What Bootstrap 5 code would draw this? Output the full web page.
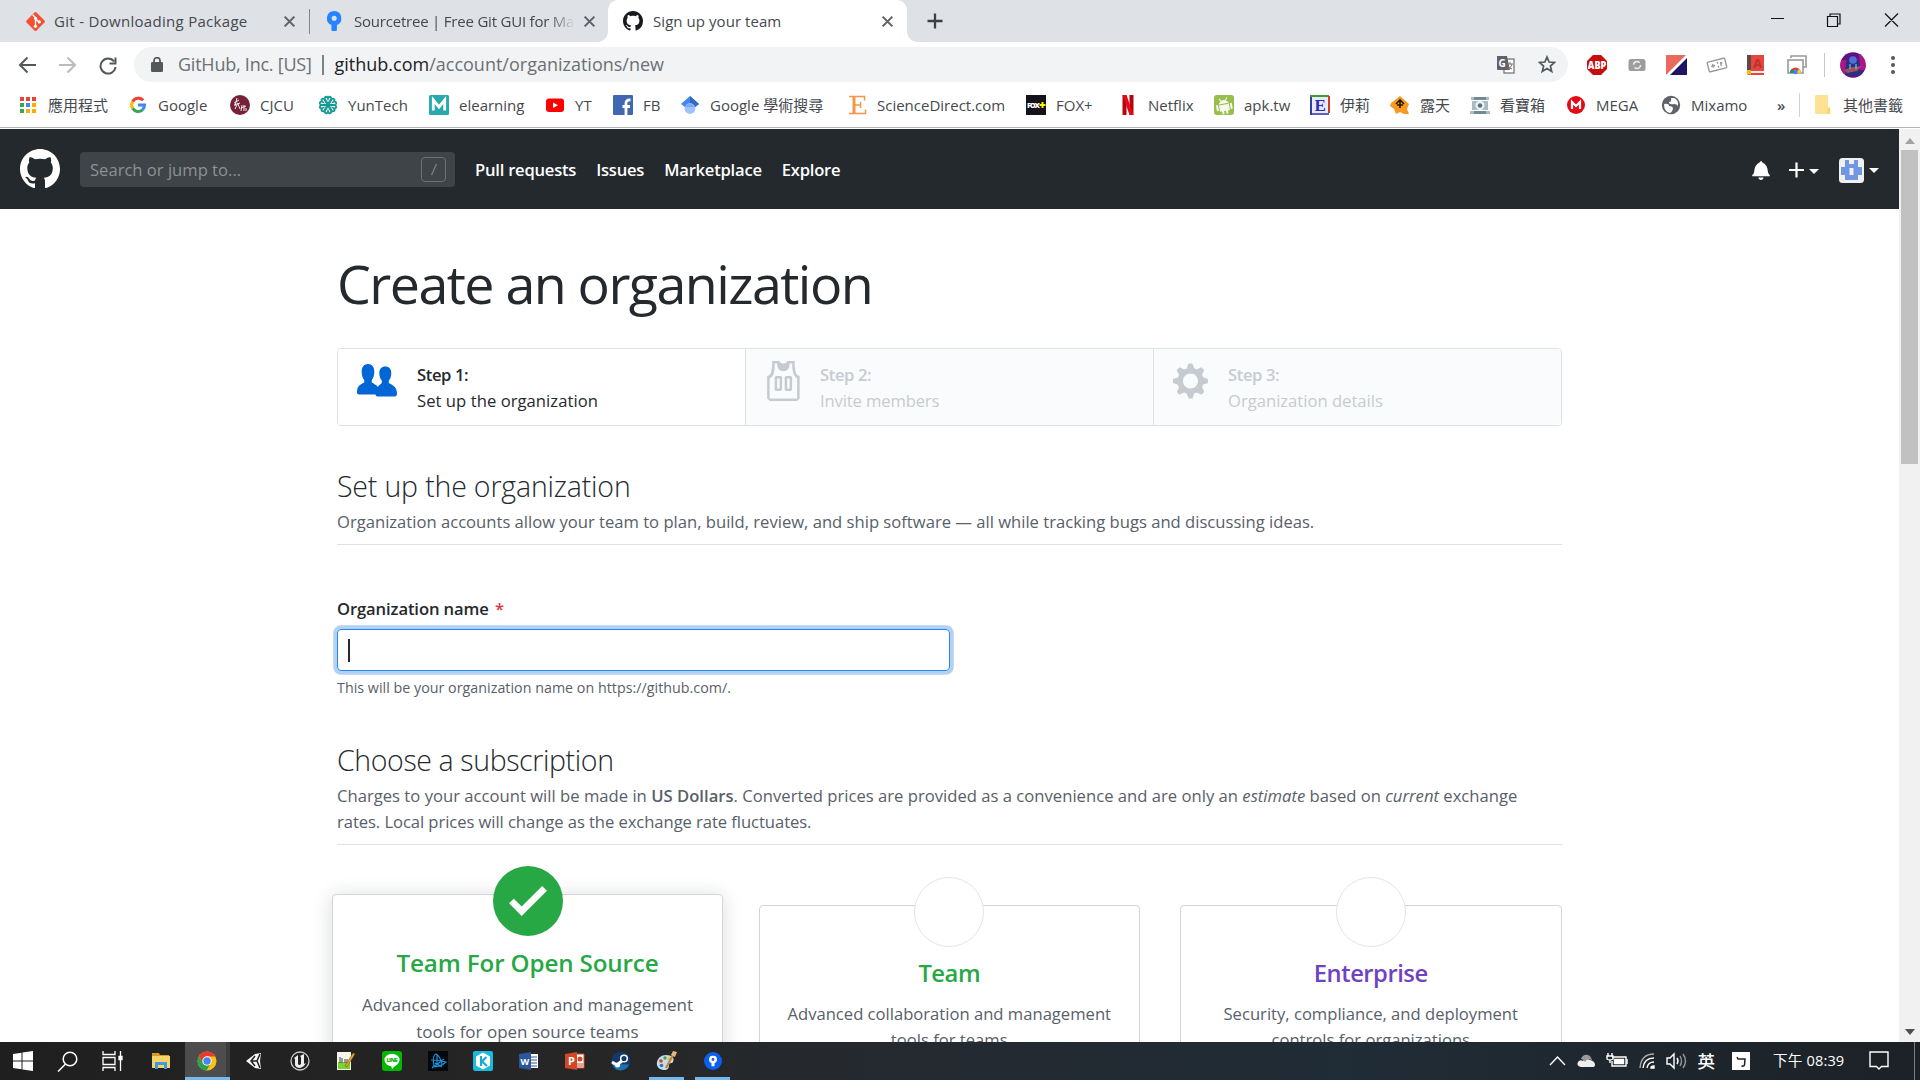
<!DOCTYPE html>
<html lang="zh-Hant">
<head>
<meta charset="utf-8">
<title>Sign up your team</title>
<link href="https://cdn.jsdelivr.net/npm/bootstrap@5.3.0/dist/css/bootstrap.min.css" rel="stylesheet">
<style>
body{width:1920px;height:1080px;overflow:hidden;font-family:"Open Sans","Noto Sans CJK TC",sans-serif;font-size:15px;line-height:22px;color:#24292e;background:#fff}
svg{display:block;flex:none}
/* browser chrome */
.tabstrip{height:42px;background:#dee1e6;color:#45494d}
.tab-item{height:42px;padding:5px 0 5px 24px}
.tab-item .tab-ico{width:20px;margin-right:10px}
.tab-label{white-space:nowrap;overflow:hidden;flex:none}
.tab-one{width:310px}
.tab-two{width:298px;padding-left:12px}
.tab-one .tab-label{width:225px;letter-spacing:.02em}
.tab-two .tab-label{width:221px;letter-spacing:-.014em;-webkit-mask-image:linear-gradient(90deg,#000 88%,transparent);mask-image:linear-gradient(90deg,#000 88%,transparent)}
.tab-sep{width:1px;height:25px;background:#80868b;margin-left:-1px}
.tab-on{width:299px;background:#fff;border-radius:10px 10px 0 0;padding-left:15px;position:relative}
.tab-on::before,.tab-on::after{content:"";position:absolute;bottom:0;width:10px;height:10px}
.tab-on::before{left:-10px;background:radial-gradient(circle at 0 0,transparent 9.5px,#fff 10px)}
.tab-on::after{right:-10px;background:radial-gradient(circle at 100% 0,transparent 9.5px,#fff 10px)}
.tab-on .tab-label{width:224px;letter-spacing:.004em}
.addr-row{height:45px;padding:5px 0 5px 18px}
.omni{height:35px;width:1434px;background:#f1f3f4;border-radius:18px;font-size:18px;color:#6b7075;padding-left:17px;margin-left:16px}
.omni span{position:relative}
.omni-text{padding-bottom:2px}
.omni-host{color:#202124}
.marks{height:40px;padding-left:18px;color:#45494d;padding-bottom:4px}
.bm{white-space:nowrap}
.bm svg{margin-right:10px}
.chrome-edge{height:2px;border-top:1px solid #b3b6b8}
/* site */
.viewport-row{height:913px;overflow:hidden}
.gh-head{height:80px;background:#24292e;color:#fff;padding:0 20px}
.gh-search{width:375px;height:35px;background:#3f4448;border-radius:4px;color:#8d9194;font-size:16.6px;padding:0 9px 0 10px;margin-left:20px}
.gh-search-text{padding-top:2px}
.slash-key{width:25px;height:25px;border:1px solid #6b7075;border-radius:4px}
.gh-nav{font-weight:600;font-size:16.6px;letter-spacing:-.014em;gap:20px;margin-left:20px;padding-top:1px}
.caret-dn{width:0;height:0;border:5px solid transparent;border-top-color:#fff;border-bottom:0}
.scroller{width:21px;background:#f1f1f1;padding-top:9px}
.scroll-thumb{width:17px;height:314px;background:#c1c1c1;margin-top:6px}
.arr{width:0;height:0;border:5px solid transparent}
.arr-up{border-bottom:6px solid #a3a3a3;border-top:0}
.arr-down{border-top:6px solid #505050;border-bottom:0;margin-top:auto;margin-bottom:7px}
.org-main{width:1225px;margin-left:337px;padding-top:31.5px;font-size:16.62px;line-height:26.25px;color:#586069}
.org-main h1{font-size:53.8px;line-height:84px;letter-spacing:-.029em;font-weight:400;color:#24292e;margin:0 0 23.5px}
.org-main h2{font-size:28.5px;line-height:45px;font-weight:300;letter-spacing:-.006em;color:#24292e;margin:0}
.steps-box{height:78px;border:1px solid #dfe2e5;border-radius:4px;overflow:hidden;margin-bottom:37.5px}
.step{width:408px;padding-top:13px;color:#c6cbd1;background:#fafbfc;border-left:1px solid #dfe2e5}
.step-now{width:407px;background:#fff;color:#24292e;border-left:0;letter-spacing:.003em}
.lbl{font-weight:600;letter-spacing:-.007em}
.step b{font-weight:600;letter-spacing:-.024em}
.sec-desc{border-bottom:1px solid #dfe2e5;padding-bottom:9.5px;margin:0}
.sec-desc-plan{padding-bottom:8.5px;letter-spacing:.001em}
.lbl{color:#24292e;margin:50.5px 0 7px;line-height:26.25px}
.org-input{width:613px;height:42px;border:1px solid #2188ff;border-radius:4px;box-shadow:0 0 0 3.75px rgba(3,102,214,.3);padding-left:10px}
.text-caret{width:2px;height:23px;background:#24292e}
.hint{font-size:14.25px;line-height:22.5px;margin:6px 0 38px;letter-spacing:.002em}
.plan{width:381.5px;height:300px;border:1px solid #d1d5da;border-radius:4px;background:#fff;text-align:center;position:relative;margin-top:60px;padding:49px 24px 0}
.plan h3{font-size:23.75px;line-height:37px;font-weight:600;letter-spacing:-.02em;margin:0 0 9.2px;color:#28a745}
.plan-on{width:391px;margin:49px 35.5px 0 -5px;box-shadow:0 2px 20px rgba(27,31,35,.16);font-size:17px;line-height:27px}
.plan-on h3{font-size:24.2px;line-height:38px;letter-spacing:-.006em;margin-bottom:9px}
.plan-ent{margin-left:40px}.plan-ent h3{color:#6f42c1}
.dot{position:absolute;width:70px;height:70px;top:-29px;left:50%;margin-left:-35px;border-radius:50%;border:1px solid #e1e4e8;background:#fff}
.dot-on{background:#28a745;border:0}
/* desktop bar */
.taskbar{height:38px;background:linear-gradient(90deg,#1f1f1f 0,#262626 30%,#242a31 50%,#202c36 70%,#1c2126 100%);color:#fff;font-size:14.6px}
.task{width:45.9px;height:38px;flex:none}
.task-sys{width:45px}
.task-files{width:50px;padding-left:2px}
.task-run{border-bottom:3px solid #76b9ed;padding-top:3px;width:35px;margin:0 5.45px}
.task-now{background:#4d4d4d;border-bottom:3px solid #76b9ed;padding:3px 2px 0 0;width:45px;margin:0 1px 0 0;box-shadow:inset -4px 0 #3c3c3c}
</style>
<script src="https://cdn.jsdelivr.net/npm/bootstrap@5.3.0/dist/js/bootstrap.bundle.min.js"></script>
</head>
<body class="d-flex flex-column">
<svg width="0" height="0" class="position-absolute"><defs>
<symbol id="ghmark" viewBox="0 0 16 16"><path fill-rule="evenodd" d="M8 0C3.58 0 0 3.58 0 8c0 3.54 2.29 6.53 5.47 7.59.4.07.55-.17.55-.38 0-.19-.01-.82-.01-1.49-2.01.37-2.53-.49-2.69-.94-.09-.23-.48-.94-.82-1.13-.28-.15-.68-.52-.01-.53.63-.01 1.08.58 1.23.82.72 1.21 1.87.87 2.33.66.07-.52.28-.87.51-1.07-1.78-.2-3.64-.89-3.64-3.95 0-.87.31-1.59.82-2.15-.08-.2-.36-1.02.08-2.12 0 0 .67-.21 2.2.82.64-.18 1.32-.27 2-.27s1.36.09 2 .27c1.53-1.04 2.2-.82 2.2-.82.44 1.1.16 1.92.08 2.12.51.56.82 1.27.82 2.15 0 3.07-1.87 3.75-3.65 3.95.29.25.54.73.54 1.48 0 1.07-.01 1.93-.01 2.2 0 .21.15.46.55.38A8.01 8.01 0 0 0 16 8c0-4.42-3.58-8-8-8z"/></symbol>
<symbol id="cross" viewBox="0 0 12 12"><path d="M1.500 1.500l9 9m0-9l-9 9" stroke="#5f6368" stroke-width="1.900"/></symbol>
<symbol id="pin" viewBox="0 0 16 22"><path d="M8 0a8 8 0 0 0-3 15.400V21q0 1 1 1h4q1 0 1-1v-5.600A8 8 0 0 0 8 0zm0 5.200a2.800 2.800 0 1 1 0 5.600 2.800 2.800 0 0 1 0-5.600z"/></symbol>
</defs></svg>

<div class="tabstrip d-flex align-items-center">
  <div class="tab-item tab-one d-flex align-items-center">
    <svg class="me-2" style="margin-left:1px" width="21" height="21" viewBox="0 0 22 22"><rect x="3.600" y="3.600" width="14.800" height="14.800" rx="1.500" transform="rotate(45 11 11)" fill="#f4502f"/><path d="M8 4l3 3v9M11 8l4 4" stroke="#fff" stroke-width="1.500" fill="none"/><circle cx="11" cy="7.500" r="1.600" fill="#fff"/><circle cx="11" cy="16" r="1.700" fill="#fff"/><circle cx="15" cy="11.500" r="1.700" fill="#fff"/></svg>
    <span class="tab-label">Git - Downloading Package</span>
    <svg class="ms-1" width="13" height="13"><use href="#cross"/></svg>
  </div>
  <div class="tab-sep"></div>
  <div class="tab-item tab-two d-flex align-items-center">
    <svg class="ms-1 me-2" width="20" height="20" viewBox="0 0 20 22"><use href="#pin" width="16" height="22" fill="#2684ff"/></svg>
    <span class="tab-label">Sourcetree | Free Git GUI for Ma</span>
    <svg class="ms-2" width="13" height="13"><use href="#cross"/></svg>
  </div>
  <div class="tab-item tab-on d-flex align-items-center">
    <svg class="tab-ico" width="20" height="20" fill="#17191c"><use href="#ghmark"/></svg>
    <span class="tab-label">Sign up your team</span>
    <svg class="ms-1" width="13" height="13"><use href="#cross"/></svg>
  </div>
  <svg style="margin-left:20px" width="16" height="16" viewBox="0 0 16 16"><path d="M8 .500v15M.500 8h15" stroke="#3c4043" stroke-width="2.300"/></svg>
  <svg class="ms-auto" style="margin-right:21px;margin-bottom:4px" width="128" height="16" viewBox="0 0 128 16" fill="none" stroke="#111" stroke-width="1.200"><path d="M0 7.500h13M56.500 5.500h10v10h-10zM59 5.500v-2.500h10v10h-2.500M114 2.500l13 13m0-13l-13 13"/></svg>
</div>

<div class="addr-row d-flex align-items-center">
  <svg width="100" height="20" viewBox="0 0 100 20" fill="none" stroke-width="2"><path d="M18 10H2m7.500-7.500L2 10l7.500 7.500" stroke="#54585c"/><path d="M41 10h16m-7.500-7.500L57 10l-7.500 7.500" stroke="#b9bbbe"/><path d="M96 6.500A7.500 7.500 0 1 0 97.500 12M97.500 2.500v6h-6" stroke="#54585c"/></svg>
  <div class="omni d-flex align-items-center">
    <svg width="12" height="15" viewBox="0 0 12 15"><rect y="5" width="12" height="10" rx="1.300" fill="#54585c"/><path d="M3 6V3.600a3 3 0 0 1 6 0V6" fill="none" stroke="#54585c" stroke-width="1.700"/></svg>
    <span class="omni-text" style="letter-spacing:-.013em;margin-left:15px;width:144px">GitHub, Inc. [US]</span>
    <span style="width:1.500px;height:20px;background:#7d8286;margin:0 11px 0 0"></span>
    <span class="omni-text"><span class="omni-host">github.com</span>/account/organizations/new</span>
    <svg class="ms-auto" width="18" height="20" viewBox="0 0 18 20"><rect x="7" y="4" width="10" height="14" fill="#fff" stroke="#777" stroke-width="1.300"/><path d="M0 1h10l3 14H1q-1 0-1-1z" fill="#5f6368"/><text x="1.500" y="12" font-size="10" font-weight="700" fill="#fff">G</text><path d="M10 9h6M13 7v2m2 0q-1 4-4 5m0-3q2 3 4 3" stroke="#777" fill="none"/></svg>
    <svg style="margin:0 12px 0 23px" width="18" height="19" viewBox="0 0 18 19"><path d="M9 2l2.100 5 5.400.500-4.100 3.500 1.300 5.400L9 13.500l-4.700 2.900L5.600 11 1.500 7.500 6.900 7z" fill="none" stroke="#54585c" stroke-width="1.700"/></svg>
  </div>
  <svg style="margin-left:18px" width="221" height="24" viewBox="0 0 221 24">
    <path d="M7 2h8l6 6v8l-6 6H7l-6-6V8z" fill="#c70d0d"/><text x="1.800" y="15.800" font-size="10.500" font-weight="800" textLength="18.500" lengthAdjust="spacingAndGlyphs" fill="#fff">ABP</text>
    <rect x="42.500" y="6" width="17" height="12" rx="2.500" fill="#9d9d9d"/><circle cx="51" cy="12" r="3.500" stroke="#eee" stroke-width="1.500" fill="none" stroke-dasharray="8 3"/>
    <path d="M80 2h20L80 22z" fill="#ea6a60"/><path d="M101 5v17H84z" fill="#1d1464"/>
    <g transform="rotate(-14 131 12)" fill="none" stroke="#999" stroke-width="1.400"><rect x="122" y="7" width="18" height="10" rx="1"/><path d="M125 12h4m-2-2v4m5-5v2m4-1v2m-4 1v2m3-5v4"/></g>
    <path d="M161 2h17v20h-16q-1-2-1-4z" fill="#e8453c"/><path d="M161 2h4v16h-4z" fill="#5e4a4a"/><path d="M164 18h14v2h-14z" fill="#eee"/><path d="M161 17h4v5l-2-1-2 1z" fill="#f6b81c"/><text x="167" y="15" font-size="13" font-weight="700" fill="#b7352c">A</text>
    <path d="M205 5V3h15v11h-3" fill="none" stroke="#999" stroke-width="1.600"/><rect x="202" y="7" width="15" height="13" fill="#fff" stroke="#999" stroke-width="1.600"/><path d="M204 20a5.500 5.500 0 0 1 11 0z" fill="#db4437"/><path d="M204 20q0-3 2-4l3 4z" fill="#0f9d58"/><path d="M215 20q0-3-2-4l-3 4z" fill="#fc3"/><circle cx="209.500" cy="19" r="2.200" fill="#4285f4"/>
  </svg>
  <span class="vr" style="height:24px;margin:0 15px 0 17px;align-self:center"></span>
  <svg width="26" height="26" viewBox="0 0 26 26"><defs><clipPath id="av"><circle cx="13" cy="13" r="12.700"/></clipPath></defs><g clip-path="url(#av)"><path d="M0 0h26v26H0z" fill="#5c1286"/><path d="M0 8h7v14H0zM19 0h7v18h-6z" fill="#b01489"/><path d="M6 9q6-8 13 0l2 14H5z" fill="#26347e"/><circle cx="13" cy="8" r="3.800" fill="#536fd5"/><path d="M4 18l9-3 9-1-5 5-10 2z" fill="#9a5260"/><path d="M10 12v5m6-5v5" stroke="#a8c3ff"/></g></svg>
  <svg style="margin-left:25px" width="4" height="20" fill="#54585c"><circle cx="2" cy="3" r="2"/><circle cx="2" cy="10" r="2"/><circle cx="2" cy="17" r="2"/></svg>
</div>

<div class="marks d-flex align-items-center">
  <div class="bm d-flex align-items-center" style="width:110px"><svg width="20" height="20" viewBox="0 0 20 20"><path d="M2 2h4v4H2zM8 2h4v4H8zM14 2h4v4h-4z" fill="#ea4335"/><path d="M2 8h4v4H2zM2 14h4v4H2z" fill="#34a853"/><path d="M8 8h4v4H8z" fill="#4285f4"/><path d="M14 8h4v4h-4zM8 14h4v4H8zM14 14h4v4h-4z" fill="#fbaf00"/></svg>應用程式</div>
  <div class="bm d-flex align-items-center" style="width:102px"><svg width="20" height="20" viewBox="0 0 20 20" fill="none" stroke-width="3.100"><path d="M15.200 5.300A6.500 6.500 0 0 0 4.600 6.700" stroke="#ea4335"/><path d="M4.600 6.700a6.500 6.500 0 0 0 0 6.600" stroke="#fbbc05"/><path d="M4.600 13.300a6.500 6.500 0 0 0 9.900 1.600" stroke="#34a853"/><path d="M14.500 14.900q2-2 2-4.900H10" stroke="#4285f4"/></svg>Google</div>
  <div class="bm d-flex align-items-center" style="width:88px"><svg width="20" height="20" viewBox="0 0 20 20"><circle cx="10" cy="10" r="10" fill="#76203a"/><path d="M4 8l5-3M7 3l-2 8m-1-1l6-2M8 8l-3 6m3-5l2 5M12 10l-1 6m0-3l5-2m-2-1v6m2-3v3" stroke="#eee" stroke-width="1" fill="none"/></svg>CJCU</div>
  <div class="bm d-flex align-items-center" style="width:111px"><svg width="20" height="20" viewBox="0 0 20 20" fill="none" stroke="#199a96" stroke-width="1.900"><path id="petal" d="M10 9.500Q5.500 5 7 2.500 9 .500 10 3.500 11 .500 13 2.500 14.500 5 10 9.500z"/><use href="#petal" transform="rotate(60 10 10)"/><use href="#petal" transform="rotate(120 10 10)"/><use href="#petal" transform="rotate(180 10 10)"/><use href="#petal" transform="rotate(240 10 10)"/><use href="#petal" transform="rotate(300 10 10)"/></svg>YunTech</div>
  <div class="bm d-flex align-items-center" style="width:116px"><svg width="20" height="20" viewBox="0 0 20 20"><rect width="20" height="20" rx="1.500" fill="#27a9ad"/><path d="M4.300 15.500V5l5.700 7 5.700-7v10.500" stroke="#fff" stroke-width="2.800" fill="none"/></svg>elearning</div>
  <div class="bm d-flex align-items-center" style="width:68px"><svg width="20" height="20" viewBox="0 0 20 20"><rect x="1" y="3.500" width="18" height="13.500" rx="3" fill="#f00"/><path d="M8 7.500l5 2.800-5 2.800z" fill="#fff"/></svg>YT</div>
  <div class="bm d-flex align-items-center" style="width:67px"><svg width="20" height="20" viewBox="0 0 20 20"><rect width="20" height="20" rx="1" fill="#4267b2"/><path d="M9.500 11.500H17M13 20V8q0-3.300 4.500-3" stroke="#fff" stroke-width="2.800" fill="none"/></svg>FB</div>
  <div class="bm d-flex align-items-center" style="width:167px"><svg width="20" height="20" viewBox="0 0 20 20"><path d="M10 1l9 8-9 7-9-7z" fill="#4285f4"/><path d="M10 1l9 8-9 7z" fill="#356ac3"/><circle cx="10" cy="13.500" r="5.400" fill="#a0c3ff"/><path d="M5 12q5-6 10 0z" fill="#76a7fa"/></svg>Google 學術搜尋</div>
  <div class="bm d-flex align-items-center" style="width:179px"><svg width="20" height="20" viewBox="0 0 20 20"><path d="M2 1.500h15.500v4M2 18.500h16.500v-4M13.500 7v6M7 10h6.500" stroke="#f39645" stroke-width="1.500" fill="none"/><path d="M7 1v18" stroke="#f39645" stroke-width="3"/></svg>ScienceDirect.com</div>
  <div class="bm d-flex align-items-center" style="width:92px"><svg width="20" height="20" viewBox="0 0 20 20"><path d="M0 0h20v20H0z" fill="#14121a"/><text x="1" y="13" font-size="7.500" font-weight="800" fill="#fff" textLength="13">FOX</text><path d="M16.500 7v6m-3-3h6" stroke="#fff200" stroke-width="2"/></svg>FOX+</div>
  <div class="bm d-flex align-items-center" style="width:96px"><svg width="20" height="20" viewBox="0 0 20 20"><path d="M4.500 0h4v20h-4zM11.500 0h4v20h-4z" fill="#b1060f"/><path d="M4.500 0h4l7 20h-4z" fill="#e50914"/></svg>Netflix</div>
  <div class="bm d-flex align-items-center" style="width:96px"><svg width="20" height="20" viewBox="0 0 20 20"><rect width="20" height="20" rx="3" fill="#98bf4b"/><g transform="rotate(-10 10 10)" fill="#f5f8ec"><path d="M5 8q5-6 10 0v8h-2v3h-2v-3H9v3H7v-3H5zM2 9h2v6H2zM16 9h2v6h-2z"/><path d="M6 3l2 3m6-3l-2 3" stroke="#f5f8ec"/><path d="M5 9h10" stroke="#98bf4b"/></g></svg>apk.tw</div>
  <div class="bm d-flex align-items-center" style="width:80px"><svg width="20" height="20" viewBox="0 0 20 20"><path d="M1 20V1h18" stroke="#3e9c35" stroke-width="2" fill="none"/><path d="M2 2h16v16H2z" fill="#e6eafb"/><path d="M1 2v17h18" stroke="#2b2bb5" stroke-width="1.600" fill="none"/><path d="M19 1v17" stroke="#d23c2c" stroke-width="2"/><text x="4.500" y="16" font-family="Liberation Serif" font-size="17" font-weight="700" fill="#2b2bb5">E</text></svg>伊莉</div>
  <div class="bm d-flex align-items-center" style="width:80px"><svg width="20" height="20" viewBox="0 0 20 20"><path d="M10 1l9 8-2 5 2 5h-5l-4-2-4 2-2-5-4-3 1-3z" fill="#f69a22"/><path d="M6 9l4-4 4 4M10 5v8M7 10h6" stroke="#2a1b09" stroke-width="1.600" fill="none"/></svg>露天</div>
  <div class="bm d-flex align-items-center" style="width:96px"><svg width="20" height="20" viewBox="0 0 20 20"><path d="M1 2h18v3H1zM2 6h16v9H2zM0 16h20v3H0z" fill="#a9bcc4"/><path d="M4 2h12v3H4zM4 16h12v3H4z" fill="#718b96"/><circle cx="10" cy="10.500" r="4.500" fill="#eef3f5"/><circle cx="10" cy="10.500" r="2.300" fill="#5c7480"/></svg>看寶箱</div>
  <div class="bm d-flex align-items-center" style="width:95px"><svg width="20" height="20" viewBox="0 0 20 20"><circle cx="10" cy="10" r="9" fill="#e30b17"/><path d="M6 14V7l4 4 4-4v7" stroke="#fff" stroke-width="2.200" fill="none"/></svg>MEGA</div>
  <div class="bm d-flex align-items-center" style="width:116px"><svg width="20" height="20" viewBox="0 0 20 20"><circle cx="10" cy="10" r="9.200" fill="#5f6368"/><path d="M3 9q5-1 5 2 4 0 4 3-1 3-3 4-6-1-6-9zM10 3q1 4-2 4 0 3 5 2 3 0 4 2 1-6-4-8z" fill="#fff"/></svg>Mixamo</div>
  <span style="width:22px;font-weight:600">»</span>
  <span class="vr" style="height:24px;margin-right:14px;align-self:center"></span>
  <div class="bm d-flex align-items-center"><svg style="margin-right:9px" width="20" height="20" viewBox="0 0 20 20"><path d="M2 0h12v13h2v6H2q-1 0-1-1V1q0-1 1-1z" fill="#fde293"/><path d="M15 12q-3 4-1 7h2v-7z" fill="#f9d45c"/></svg>其他書籤</div>
</div>
<div class="chrome-edge"></div>

<div class="viewport-row d-flex">
  <div style="width:1899px">
    <header class="gh-head d-flex align-items-center">
      <svg width="40" height="40" fill="#fff"><use href="#ghmark"/></svg>
      <div class="gh-search d-flex align-items-center justify-content-between"><span class="gh-search-text">Search or jump to...</span><span class="slash-key d-flex justify-content-center align-items-center"><svg width="8" height="13" viewBox="0 0 8 13"><path d="M1.500 12l5-11" stroke="#7b8084" stroke-width="1.300"/></svg></span></div>
      <nav class="gh-nav d-flex"><span>Pull requests</span><span>Issues</span><span>Marketplace</span><span>Explore</span></nav>
      <svg class="ms-auto" width="18" height="20" style="margin-top:2px" viewBox="0 0 14 16" fill="#fff"><path d="M13.990 11.991v1H0v-1l.730-.580c.769-.769.809-2.547 1.189-4.416.770-3.767 4.077-4.996 4.077-4.996 0-.550.450-1 .999-1 .550 0 1 .450 1 1 0 0 3.387 1.229 4.156 4.996.380 1.879.420 3.657 1.190 4.417l.659.580h-.010zM6.995 15.990c1.110 0 1.999-.890 1.999-1.999H4.996c0 1.110.890 1.999 1.999 1.999z"/></svg>
      <svg style="margin:2px 0 0 19px" width="15" height="16" viewBox="0 0 15 16"><path d="M7.500.500v15M0 8h15" stroke="#fff" stroke-width="2.200"/></svg>
      <span class="caret-dn" style="margin:4px 0 0 5px"></span>
      <svg style="margin:2px 0 0 20px" width="25" height="25" viewBox="0 0 25 25"><rect width="25" height="25" rx="3.500" fill="#f0f0f0"/><path d="M6 2h4v4h5V2h4v7h4v8h-4v5H6v-5H2V9h4z" fill="#7196e4"/><path d="M10.500 10h4v7h-4z" fill="#f0f0f0"/></svg>
      <span class="caret-dn" style="margin:2px 0 0 5px"></span>
    </header>
    <main class="org-main">
      <h1>Create an organization</h1>
      <div class="steps-box d-flex">
        <div class="step step-now d-flex"><svg style="margin:2px 20px 0 19px" width="40" height="33" viewBox="0 0 40 33" fill="#0366d6"><path d="M11 0c4 0 6.300 3 6.300 7.500 0 4-1 7-2.500 8.500v2.500c1.500 1 5 2.500 6 4.500 1-2 3-3 4-4v-2.500c-1.500-1.500-2.500-4-2.500-7.500 0-4 2.200-6.500 6-6.500s6 2.500 6 6.500c0 3.500-1 6-2.500 7.500V19c6 3 8.200 5 8.200 11 0 1.500-1 2.500-2.500 2.500h-17c-1 0-1.800-.800-2-2H2c-1.200 0-2-.800-2-2 0-5 1.500-7.500 7.200-10V16c-1.500-1.500-2.500-4.500-2.500-8.500C4.700 3 7 0 11 0z"/></svg><div><b>Step 1:</b><br>Set up the organization</div></div>
        <div class="step d-flex" style="letter-spacing:-.008em"><svg style="margin:-1px 16px 0 18px" width="40" height="40" viewBox="0 0 15.500 16" fill="#c6cbd1"><path d="M4.500 6l-.500.500v5l.500.500h2l.500-.500v-5L6.500 6h-2zM6 11H5V7h1v4zm6.270-7.250C12.050 2.370 11.960 1.120 12 0H9.020c0 .270-.130.480-.390.690-.250.200-.630.300-1.130.300-.500 0-.880-.090-1.130-.300-.230-.200-.360-.420-.360-.690H3c.050 1.130-.030 2.380-.250 3.750C2.550 5.130 1.950 5.880 1 6v9l1 1h11l1-1V6c-.950-.130-1.530-.880-1.750-2.250h.020zM13 15H2V7c.890-.500 1.480-1.250 1.720-2.250S4.030 2.500 4 1h1c-.020.780.160 1.470.520 2.060.360.580 1.020.890 2 .940.980-.020 1.640-.330 2-.940.360-.590.500-1.280.480-2.060h1c.020 1.420.130 2.550.330 3.380.200.810.690 2 1.670 2.630v8zM8.500 6l-.500.500v5l.500.500h2l.500-.500v-5l-.500-.500h-2zm1.500 5H9V7h1v4z"/></svg><div><b>Step 2:</b><br>Invite members</div></div>
        <div class="step flex-fill d-flex"><svg style="margin:-1px 20px 0 19px" width="35" height="40" viewBox="0 0 14 16" fill="#c6cbd1"><path d="M14 8.770v-1.600l-1.940-.640-.450-1.090.880-1.840-1.130-1.130-1.810.910-1.090-.450-.690-1.920h-1.600l-.630 1.940-1.110.450-1.840-.880-1.130 1.130.910 1.810-.450 1.090L0 7.230v1.590l1.940.640.450 1.090-.880 1.840 1.130 1.130 1.810-.910 1.090.450.690 1.920h1.590l.630-1.940 1.110-.450 1.840.880 1.130-1.130-.920-1.810.470-1.090L14 8.750v.020zM7 11c-1.660 0-3-1.340-3-3s1.340-3 3-3 3 1.340 3 3-1.340 3-3 3z"/></svg><div><b>Step 3:</b><br>Organization details</div></div>
      </div>
      <h2>Set up the organization</h2>
      <p class="sec-desc">Organization accounts allow your team to plan, build, review, and ship software — all while tracking bugs and discussing ideas.</p>
      <div class="lbl">Organization name <span style="color:#d73a49;margin-left:2px">*</span></div>
      <div class="org-input d-flex align-items-center"><span class="text-caret"></span></div>
      <p class="hint">This will be your organization name on https://github.com/.</p>
      <h2 style="letter-spacing:-.0135em">Choose a subscription</h2>
      <p class="sec-desc sec-desc-plan">Charges to your account will be made in <b class="fw-semibold">US Dollars</b>. Converted prices are provided as a convenience and are only an <em>estimate</em> based on <em>current</em> exchange<br><span style="letter-spacing:-.004em">rates. Local prices will change as the exchange rate fluctuates.</span></p>
      <div class="d-flex" style="width:1240px">
        <div class="plan plan-on"><span class="dot dot-on d-flex justify-content-center align-items-center"><svg width="38" height="30" viewBox="0 3.500 12 9.500"><path d="M12 5l-8 8-4-4 1.500-1.500L4 10l6.500-6.500z" fill="#fff"/></svg></span><h3>Team For Open Source</h3>Advanced collaboration and management<br>tools for open source teams</div>
        <div class="plan"><span class="dot"></span><h3>Team</h3>Advanced collaboration and management<br>tools for teams</div>
        <div class="plan plan-ent"><span class="dot"></span><h3>Enterprise</h3>Security, compliance, and deployment<br>controls for organizations</div>
      </div>
    </main>
  </div>
  <div class="scroller d-flex flex-column align-items-center"><span class="arr arr-up"></span><span class="scroll-thumb"></span><span class="arr arr-down"></span></div>
</div>

<div class="taskbar d-flex align-items-center">
  <div class="task task-sys d-flex align-items-center justify-content-center"><svg width="20" height="20" viewBox="0 0 20 20" fill="#fff"><path d="M0 3l8.500-1.300v7.800H0zM9.500 1.500L20 0v9.500H9.500zM0 10.500h8.500v7.800L0 17zM9.500 10.500H20V20L9.500 18.500z"/></svg></div>
  <div class="task task-sys d-flex align-items-center justify-content-center"><svg width="21" height="21" viewBox="0 0 21 21" fill="none" stroke="#fff" stroke-width="1.500"><circle cx="13" cy="8" r="6.800"/><path d="M8.500 13l-7.500 7.500"/></svg></div>
  <div class="task task-sys d-flex align-items-center justify-content-center"><svg width="21" height="20" viewBox="0 0 21 20" fill="none" stroke="#fff" stroke-width="1.300"><path d="M1 0v3.500h12V0M1 20v-3.500h12V20M1 6.500h12v7H1zM18.500 0v20"/><path d="M17 5.500h3v3h-3z" fill="#fff"/></svg></div>
  <div class="task task-files d-flex align-items-center justify-content-center"><svg width="20" height="18" viewBox="0 0 20 18"><path d="M1 1h7l1 2h9v4H1z" fill="#d99b22"/><path d="M1 4h18v12H1z" fill="#fbd268"/><path d="M4 10h12v7h-3v-4H7v4H4z" fill="#3d9adf"/></svg></div>
  <div class="task task-now d-flex align-items-center justify-content-center"><svg width="20" height="20" viewBox="0 0 20 20"><circle cx="10" cy="10" r="9.500" fill="#fbc116"/><path d="M1.800 5.200A9.500 9.500 0 0 1 18.300 5.500H10L6 12z" fill="#e33b2e"/><path d="M1.800 5.200A9.500 9.500 0 0 0 9.500 19.500L14 12H6z" fill="#2ba24c"/><circle cx="10" cy="10" r="4.700" fill="#fff"/><circle cx="10" cy="10" r="3.700" fill="#4285f4"/></svg></div>
  <div class="task d-flex align-items-center justify-content-center"><svg width="18" height="18" viewBox="0 0 18 18"><path d="M1 9l9-7 6-1-1 8 1 8-6-1z" fill="#f6f6f6"/><path d="M6 9h6l3-7M12 9l3 7M10 4L6 9l4 5" stroke="#222" stroke-width="1.500" fill="none"/></svg></div>
  <div class="task d-flex align-items-center justify-content-center"><svg width="20" height="20" viewBox="0 0 20 20"><circle cx="10" cy="10" r="9" fill="#222" stroke="#ccc" stroke-width="1.300"/><path d="M4 7l4-3v9q1 2 3 0V6l-1-1 4-2v10l2-1q-2 4-6 5-4 0-5-3V8z" fill="#eee"/></svg></div>
  <div class="task d-flex align-items-center justify-content-center"><svg width="20" height="20" viewBox="0 0 20 20"><path d="M1 1h14v18H1z" fill="#f5f5e9"/><path d="M2 11h12v7H2z" fill="#79d332"/><path d="M4 6v6m2-5v5m3-4v4m2-4v4" stroke="#444"/><path d="M9 15L17 2l2 1-8 13z" fill="#e2a52e" stroke="#70460d" stroke-width=".500"/></svg></div>
  <div class="task d-flex align-items-center justify-content-center"><svg width="20" height="20" viewBox="0 0 20 20"><rect width="20" height="20" rx="3" fill="#00b900"/><ellipse cx="10" cy="9" rx="7.500" ry="6.200" fill="#fff"/><path d="M9 14l1 4 5-5z" fill="#fff"/><text x="4.500" y="11" font-size="5.500" font-weight="800" textLength="11" fill="#00b900">LINE</text></svg></div>
  <div class="task d-flex align-items-center justify-content-center"><svg width="20" height="20" viewBox="0 0 20 20"><path d="M0 0h20v20H0z" fill="#04070b"/><path d="M6 15Q4 4 8 3q4 2 6 10 0 4-7-1M3 9q8 0 15 2-5 5-14 5M9 4v9l5 3M4 17l12-9" fill="none" stroke="#1b93db" stroke-width="1.200"/></svg></div>
  <div class="task d-flex align-items-center justify-content-center"><svg width="20" height="20" viewBox="0 0 20 20"><rect width="20" height="20" rx="2" fill="#18bbdc"/><path d="M10 1.500l7 4v9l-7 4-7-4v-9z" fill="#fff"/><path d="M8 5v10M13.500 6L9 10.500l5 4.500" stroke="#18a9cc" stroke-width="2.200" fill="none"/></svg></div>
  <div class="task d-flex align-items-center justify-content-center"><svg width="20" height="18" viewBox="0 0 20 18"><path d="M10 2h9v14h-9z" fill="#fff"/><path d="M11 5h7m-7 3h7m-7 3h7m-7 3h7" stroke="#2b579a"/><path d="M0 2l12-2v18L0 16z" fill="#2b579a"/><text x="1.500" y="12.500" font-size="9" font-weight="700" fill="#fff">W</text></svg></div>
  <div class="task d-flex align-items-center justify-content-center"><svg width="20" height="18" viewBox="0 0 20 18"><path d="M10 2h9v14h-9z" fill="#fff" stroke="#d24726"/><circle cx="15" cy="7" r="2.500" fill="#d24726"/><path d="M12 12h6m-6 2h6" stroke="#d24726"/><path d="M0 2l12-2v18L0 16z" fill="#d24726"/><text x="3" y="13" font-size="11" font-weight="700" fill="#fff">P</text></svg></div>
  <div class="task d-flex align-items-center justify-content-center"><svg width="20" height="20" viewBox="0 0 20 20"><circle cx="10" cy="10" r="9.500" fill="#15386b"/><path d="M1 13q3 7 9 6.500 6-1 8-6z" fill="#1c73ae"/><path d="M1 11l5 3 6-5" stroke="#fff" stroke-width="3" fill="none"/><circle cx="13" cy="7.500" r="3.300" fill="#15386b" stroke="#fff" stroke-width="1.500"/><circle cx="6.500" cy="14" r="2.500" fill="#fff"/></svg></div>
  <div class="task task-run d-flex align-items-center justify-content-center"><svg width="21" height="20" viewBox="0 0 21 20"><path d="M10 4c6 0 9 3 7 7-1 2-4 0-4 3s-1 5-5 5c-5 0-8-4-7-8s4-7 9-7z" fill="#c5dde9"/><circle cx="5" cy="10" r="1.800" fill="#d63b28"/><circle cx="9" cy="7" r="1.700" fill="#48a43a"/><circle cx="5.500" cy="14.500" r="1.800" fill="#2d72c4"/><circle cx="13" cy="8" r="1.500" fill="#e7b72d"/><path d="M10 17l7-13" stroke="#c98235" stroke-width="2.200"/><path d="M15 4l2-4 4 1-2 5z" fill="#e7b580"/></svg></div>
  <div class="task task-run d-flex align-items-center justify-content-center"><svg width="18" height="18" viewBox="0 0 18 18"><circle cx="9" cy="9" r="9" fill="#0d5fee"/><use href="#pin" x="5" y="3.500" width="8" height="11" fill="#fff"/></svg></div>

  <svg style="margin-left:auto" width="140" height="24" viewBox="0 0 140 24" fill="none" stroke="#fff" stroke-width="1.400">
    <path d="M1 16l7.500-8 7.500 8"/>
    <path d="M32 18q-5-1-3-5 2-3 5-1 2-4 7-1 5 1 5 5 0 2-3 2z" fill="#eee" stroke="none"/><path d="M32 10q2-5 7-4 3 1 4 5-5-2-7 2-2-3-4-3z" fill="#999" stroke="none"/>
    <path d="M63 8h14v9H63v-5"/><path d="M65.500 10.500h9v4h-9z" fill="#fff"/><path d="M78 10v5M59 4v3m4-3v3m-5 0h6v3q-3 2-6 0zm3 4v3"/>
    <path d="M91 19q1-14 14-14" stroke="#aaa"/><path d="M94 19q1-10 11-10M98 19q1-6 7-6"/><path d="M102 19q0-2 3-2v2z" fill="#fff"/>
    <path d="M118 9h3l4-4v14l-4-4h-3z"/><path d="M128 9q2 3 0 6"/><path d="M131 7q3 5 0 10M134 5q5 7 0 14" stroke="#999"/>
  </svg>
  <span style="font:500 17.500px/24px 'Noto Sans CJK TC',sans-serif;margin-left:9px;width:34.500px">英</span>
  <svg width="18" height="18" viewBox="0 0 18 18"><path d="M0 0h18v18H0z" fill="#fff"/><path d="M5 5l1 2h7l-.500 6q-.500 1.500-3 1" fill="none" stroke="#222" stroke-width="1.500"/></svg>
  <span style="margin-left:23px;width:96px;padding-bottom:2px;letter-spacing:.01em">下午 08:39</span>
  <svg width="20" height="20" viewBox="0 0 20 20" fill="none" stroke="#fff" stroke-width="1.400"><path d="M1 1h18v14.500h-6.500L10 18l-2.500-2.500H1z"/></svg>
  <span style="width:1px;height:38px;background:#7c8084;margin:0 5px 0 25px"></span>
</div>
</body>
</html>
